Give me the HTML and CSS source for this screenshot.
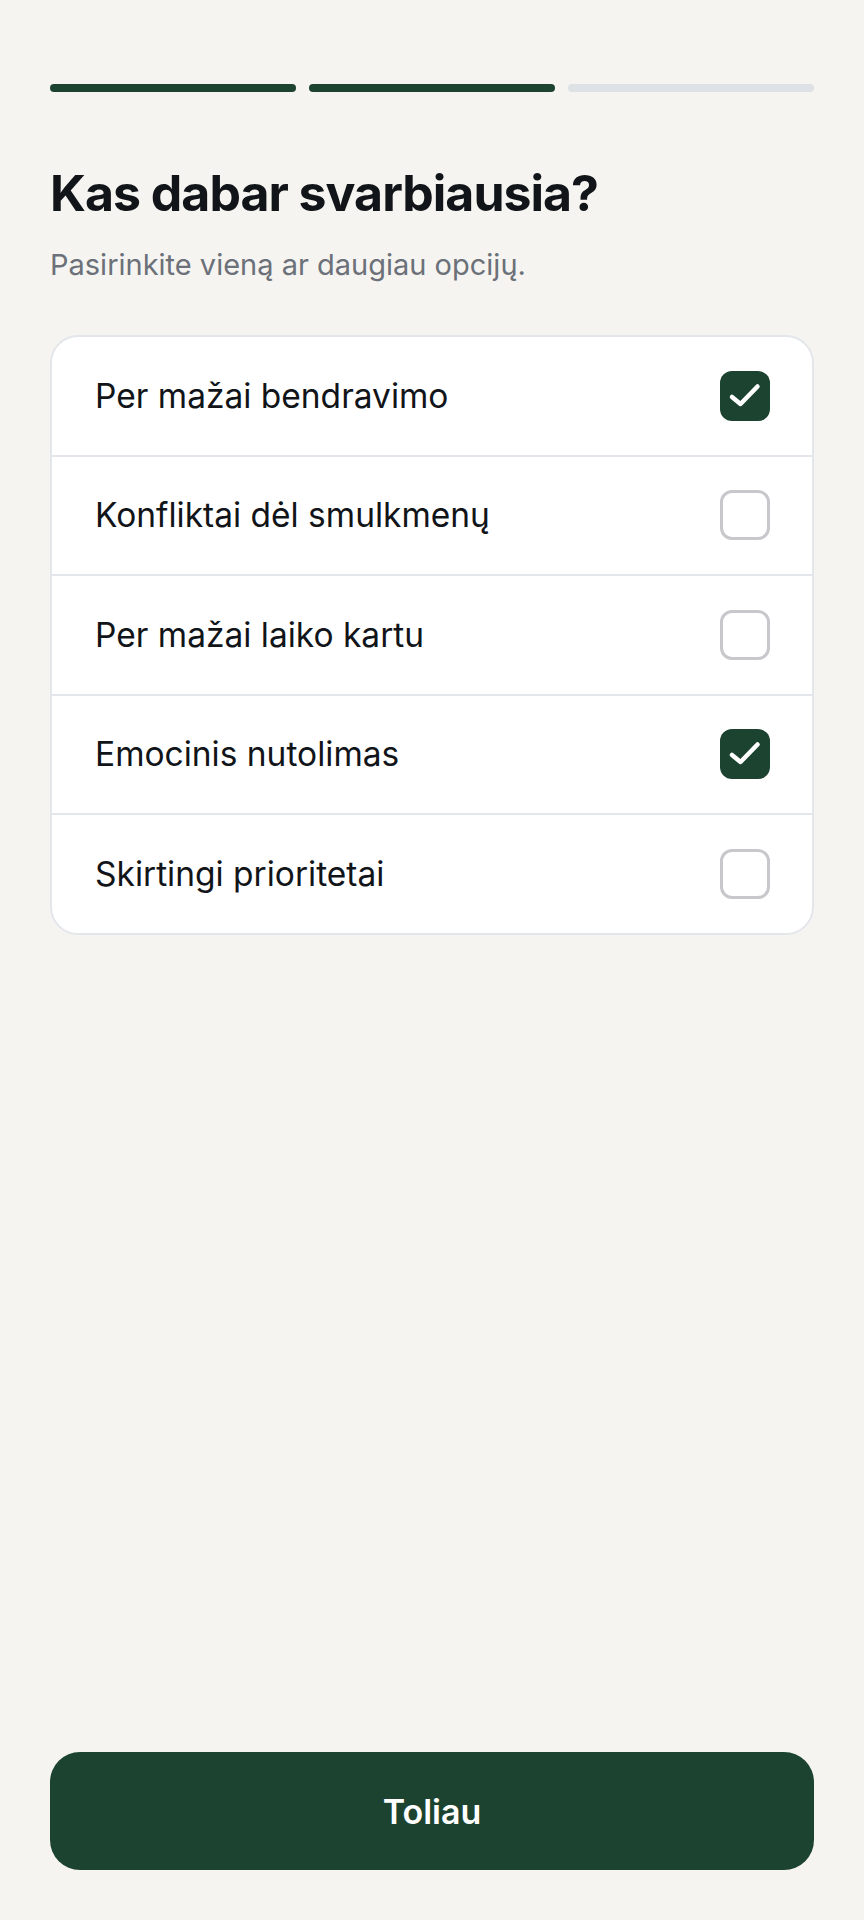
FILE: index.html
```html
<!DOCTYPE html>
<html lang="lt">
<head>
  <meta charset="UTF-8">
  <meta name="viewport" content="width=device-width, initial-scale=1.0">
  <link rel="stylesheet" href="styles.css">
  <title>Kas dabar svarbiausia?</title>
</head>
<body>
  <div class="screen">
    <div class="progress">
      <span class="step done"></span>
      <span class="step done"></span>
      <span class="step"></span>
    </div>

    <h1>Kas dabar svarbiausia?</h1>
    <p class="subtitle">Pasirinkite vieną ar daugiau opcijų.</p>

    <ul class="options">
      <li class="option">
        <span>Per mažai bendravimo</span>
        <span class="box checked">
          <svg viewBox="0 0 50 50"><polyline points="12,26 20.5,33 37.5,15.5" /></svg>
        </span>
      </li>
      <li class="option">
        <span>Konfliktai dėl smulkmenų</span>
        <span class="box"></span>
      </li>
      <li class="option">
        <span>Per mažai laiko kartu</span>
        <span class="box"></span>
      </li>
      <li class="option">
        <span>Emocinis nutolimas</span>
        <span class="box checked">
          <svg viewBox="0 0 50 50"><polyline points="12,26 20.5,33 37.5,15.5" /></svg>
        </span>
      </li>
      <li class="option">
        <span>Skirtingi prioritetai</span>
        <span class="box"></span>
      </li>
    </ul>

    <button class="next">Toliau</button>
  </div>
</body>
</html>
```

FILE: styles.css
```css
/* Reset default margin and padding */
body, h1, p, ul, li {
  margin: 0;
  padding: 0;
}

body {
  font-family: Inter, "Noto Sans", sans-serif;
  background-color: #f5f4f0;
  color: #111418;
}

.screen {
  display: flex;
  flex-direction: column;
  min-height: 1920px;
  box-sizing: border-box;
  padding: 84px 50px 50px;
}

.progress {
  display: flex;
  gap: 13px;
}

.step {
  flex: 1;
  height: 8px;
  border-radius: 4px;
  background-color: #dee2e6;
}

.step.done {
  background-color: #1b4330;
}

h1 {
  margin-top: 71px;
  font-size: 50px;
  line-height: 60px;
  font-weight: 700;
  letter-spacing: -0.02em;
}

.subtitle {
  margin-top: 22px;
  font-size: 29px;
  line-height: 40px;
  color: #6b7079;
}

.options {
  list-style: none;
  margin-top: 50px;
  background-color: #fff;
  border: 2px solid #e3e6ea;
  border-radius: 28px;
  overflow: hidden;
}

.option {
  display: flex;
  align-items: center;
  justify-content: space-between;
  height: 117.5px;
  padding: 0 42px 0 43px;
  font-size: 33.5px;
}

.option + .option {
  border-top: 2px solid #e3e6ea;
}

.box {
  width: 50px;
  height: 50px;
  box-sizing: border-box;
  border: 3px solid #c8c8cc;
  border-radius: 12px;
}

.box.checked {
  border: none;
  background-color: #1b4330;
}

.box svg {
  display: block;
  width: 50px;
  height: 50px;
  fill: none;
  stroke: #fff;
  stroke-width: 4.5;
  stroke-linecap: round;
  stroke-linejoin: round;
}

.next {
  margin-top: auto;
  height: 118px;
  border: none;
  border-radius: 30px;
  background-color: #1b4330;
  color: #fff;
  font-family: Inter, "Noto Sans", sans-serif;
  font-size: 34px;
  font-weight: 600;
  cursor: pointer;
}
```
